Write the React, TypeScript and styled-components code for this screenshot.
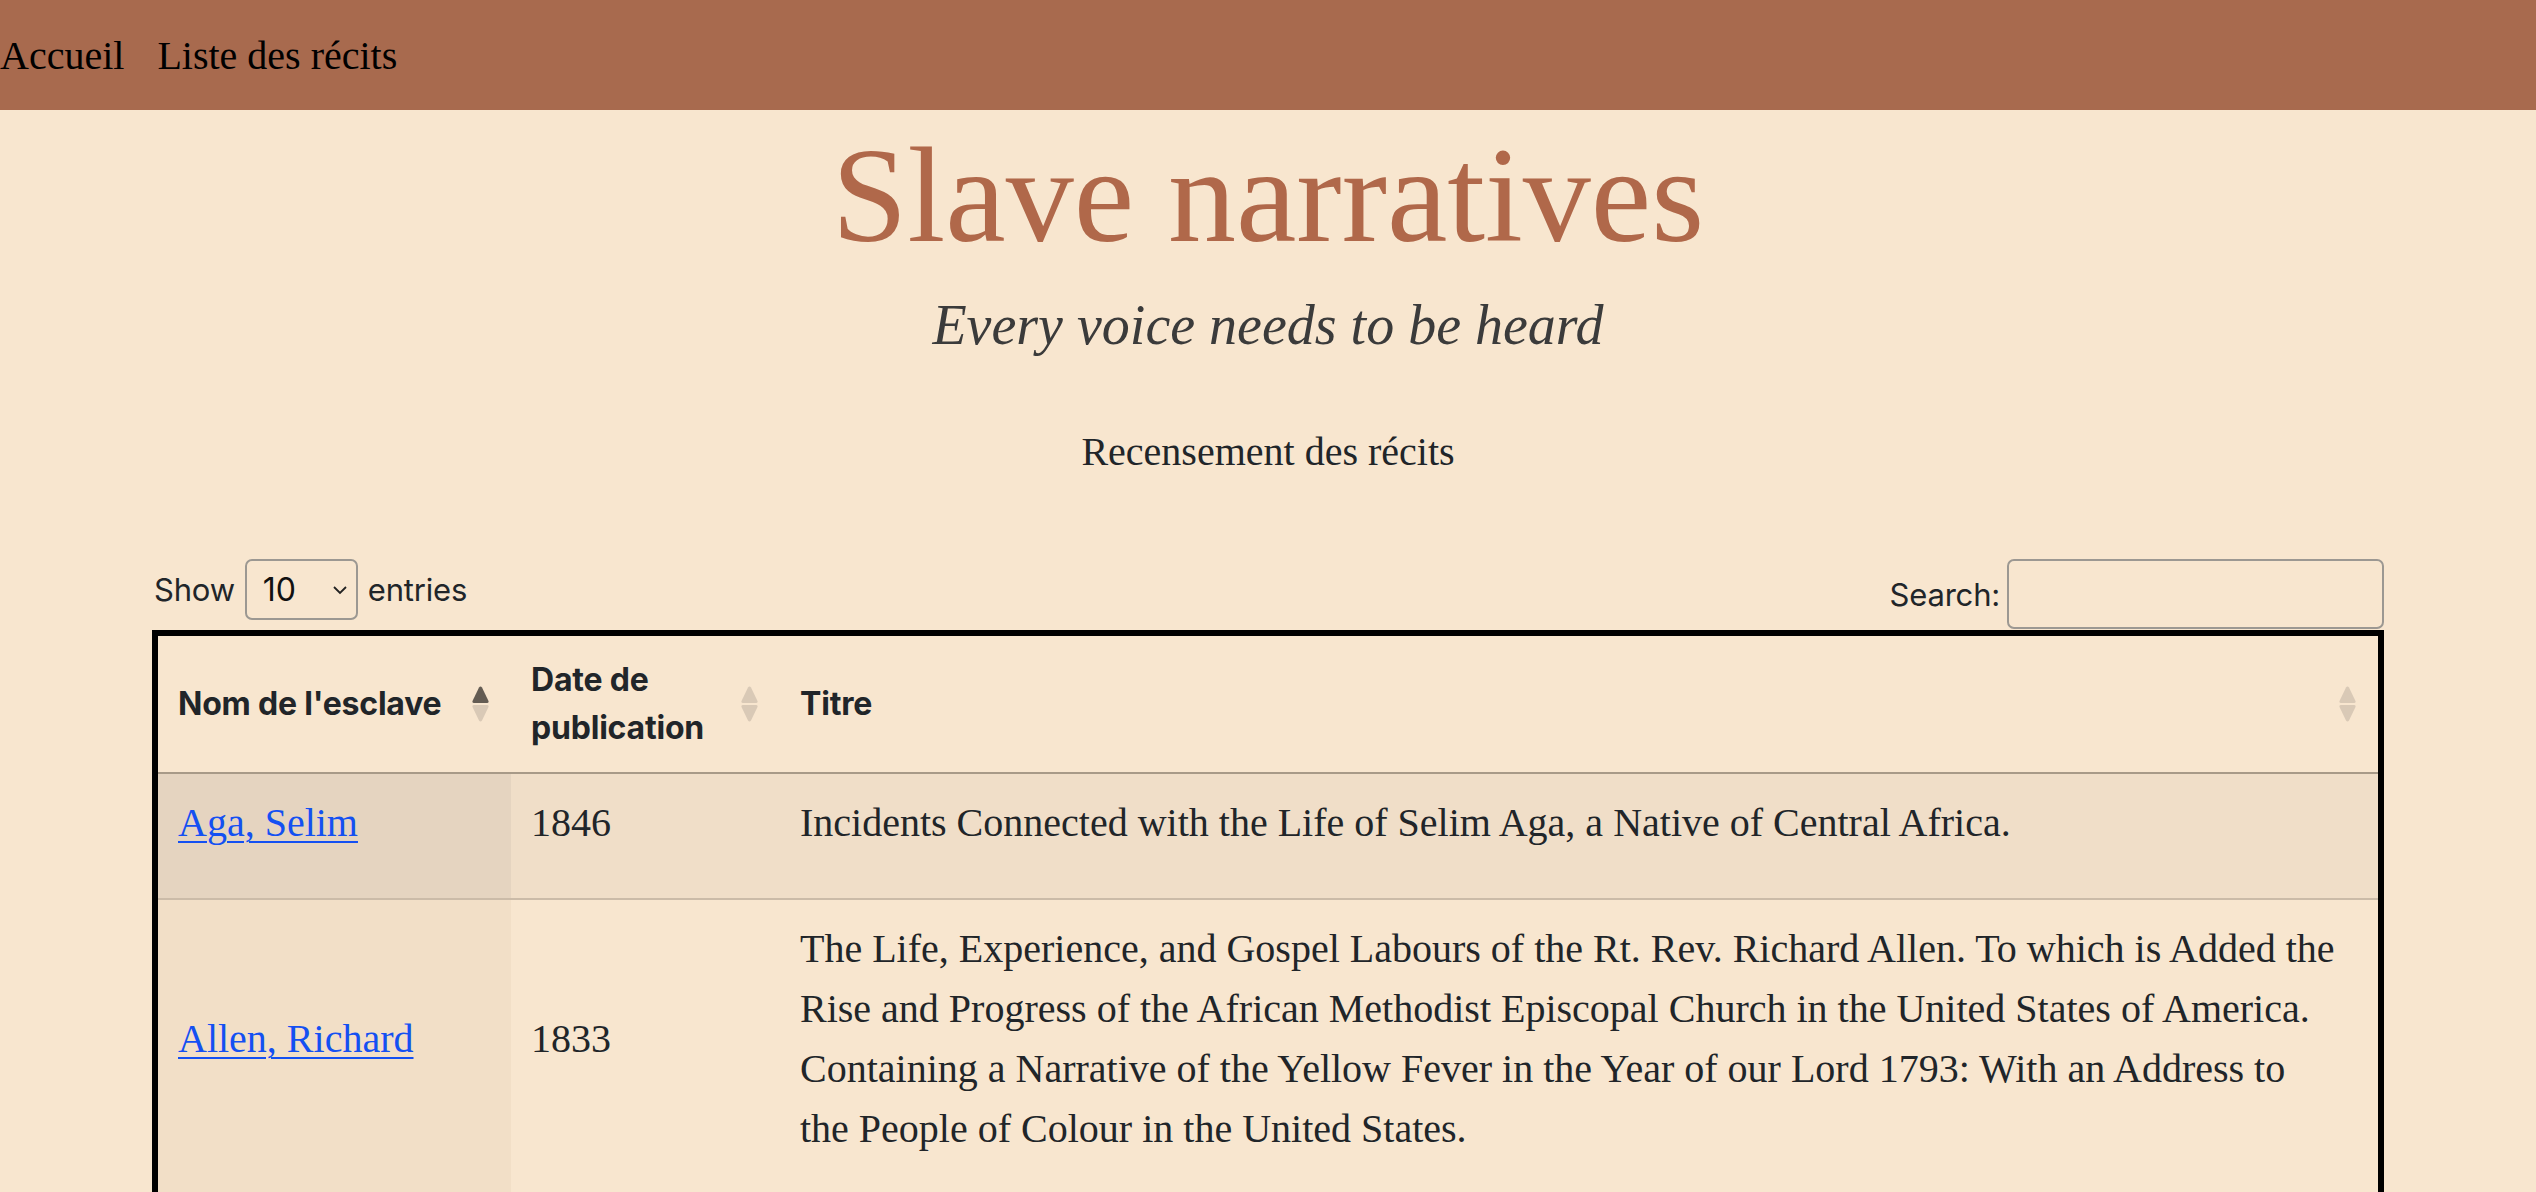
import React from "react";
import styled, { createGlobalStyle } from "styled-components";

const GlobalStyle = createGlobalStyle`
  html, body {
    margin: 0;
    background: #f8e6cf;
  }
  body {
    font-family: "Liberation Serif", "Times New Roman", serif;
    color: #212529;
  }
`;

const Nav = styled.nav`
  height: 110px;
  background: #a86a4e;
  display: flex;
  align-items: center;
  gap: 33px;
`;

const NavLink = styled.a`
  font-size: 40px;
  line-height: 60px;
  padding-top: 2px;
  color: #000;
  text-decoration: none;
`;

const Header = styled.header`
  text-align: center;
`;

const Title = styled.h1`
  margin: 4px 0 0;
  font-size: 136px;
  font-weight: 400;
  line-height: 1.2;
  color: #b0684a;
`;

const Subtitle = styled.p`
  margin: 15px 0 0;
  font-size: 56px;
  font-style: italic;
  line-height: 1.2;
  color: #3b3b3b;
`;

const Lead = styled.p`
  margin: 63px 0 0;
  font-size: 40px;
  line-height: 1.5;
`;

const Main = styled.main`
  max-width: 2232px;
  margin: 77px auto 0;
`;

const Controls = styled.div`
  display: flex;
  justify-content: space-between;
  align-items: flex-start;
  font-family: Inter, "Liberation Sans", sans-serif;
  font-size: 31px;
  letter-spacing: -0.2px;
  color: #212529;
`;

const LengthLabel = styled.label`
  display: flex;
  align-items: center;
  gap: 10px;
  height: 61px;
  padding-left: 2px;
`;

const SelectWrap = styled.span`
  display: inline-grid;
  align-items: center;
  & > * {
    grid-area: 1 / 1;
  }
`;

const Select = styled.select`
  appearance: none;
  width: 113px;
  height: 61px;
  padding: 0 0 0 16px;
  border: 2px solid #9c9892;
  border-radius: 7px;
  background: transparent;
  font-family: inherit;
  font-size: 32px;
  color: #111;
`;

const Chevron = styled.svg`
  justify-self: end;
  margin-right: 10px;
  pointer-events: none;
`;

const SearchLabel = styled.label`
  display: flex;
  align-items: center;
  gap: 7px;
`;

const SearchInput = styled.input`
  width: 377px;
  height: 70px;
  box-sizing: border-box;
  border: 2px solid #9c9892;
  border-radius: 7px;
  background: transparent;
  font-size: 32px;
  padding: 0 10px;
`;

const Table = styled.table`
  width: 100%;
  margin-top: 1px;
  border: 6px solid #000;
  border-collapse: separate;
  border-spacing: 0;
  table-layout: fixed;
`;

const Th = styled.th`
  padding: 20px;
  text-align: left;
  vertical-align: middle;
  font-family: Inter, "Liberation Sans", sans-serif;
  font-size: 32px;
  font-weight: 700;
  line-height: 48px;
  letter-spacing: -0.2px;
  color: #212529;
  border-bottom: 2px solid #a89a88;
`;

const ThInner = styled.div`
  display: flex;
  align-items: center;
  justify-content: space-between;
  gap: 12px;
  margin-right: 2px;
`;

const Row = styled.tr`
  & + & > td {
    border-top: 2px solid #cbbba8;
  }
`;

const cellBg = (striped: boolean, sorted: boolean) => {
  if (striped && sorted) return "#e5d4c0";
  if (striped) return "#f0dec8";
  if (sorted) return "#f2dfc7";
  return "transparent";
};

const Td = styled.td<{ $striped: boolean; $sorted?: boolean }>`
  padding: 19px 20px 13px;
  vertical-align: middle;
  font-size: 40px;
  line-height: 60px;
  background: ${(p) => cellBg(p.$striped, !!p.$sorted)};
  & p {
    margin: 0 0 32px;
  }
`;

const NameLink = styled.a`
  color: #1450f2;
  text-decoration: underline;
  text-decoration-thickness: 2px;
  text-underline-offset: 5px;
`;

const SortIcon = ({ active }: { active?: boolean }) => {
  const light = "#d9c9b6";
  return (
    <svg width="17" height="36" viewBox="0 0 17 36" aria-hidden="true">
      <path d="M7 1.5 Q8.5 -0.5 10 1.5 L16.5 15 Q17 17 15 17 L2 17 Q0 17 0.5 15 Z" fill={active ? "#645c53" : light} />
      <path d="M7 34.5 Q8.5 36.5 10 34.5 L16.5 21 Q17 19 15 19 L2 19 Q0 19 0.5 21 Z" fill={light} />
    </svg>
  );
};

const rows = [
  {
    name: "Aga, Selim",
    year: "1846",
    lines: ["Incidents Connected with the Life of Selim Aga, a Native of Central Africa."],
  },
  {
    name: "Allen, Richard",
    year: "1833",
    lines: [
      "The Life, Experience, and Gospel Labours of the Rt. Rev. Richard Allen. To which is Added the",
      "Rise and Progress of the African Methodist Episcopal Church in the United States of America.",
      "Containing a Narrative of the Yellow Fever in the Year of our Lord 1793: With an Address to",
      "the People of Colour in the United States.",
    ],
  },
];

export default function App() {
  return (
    <>
      <GlobalStyle />
      <Nav>
        <NavLink href="#">Accueil</NavLink>
        <NavLink href="#">Liste des récits</NavLink>
      </Nav>
      <Header>
        <Title>Slave narratives</Title>
        <Subtitle>Every voice needs to be heard</Subtitle>
        <Lead>Recensement des récits</Lead>
      </Header>
      <Main>
        <Controls>
          <LengthLabel>
            Show
            <SelectWrap>
              <Select defaultValue="10">
                <option value="10">10</option>
                <option value="25">25</option>
                <option value="50">50</option>
                <option value="100">100</option>
              </Select>
              <Chevron width="16" height="10" viewBox="0 0 16 10">
                <path d="M2 2 L8 8 L14 2" fill="none" stroke="#222" strokeWidth="1.8" />
              </Chevron>
            </SelectWrap>
            entries
          </LengthLabel>
          <SearchLabel>
            Search:
            <SearchInput type="search" />
          </SearchLabel>
        </Controls>
        <Table>
          <colgroup>
            <col style={{ width: 353 }} />
            <col style={{ width: 269 }} />
            <col />
          </colgroup>
          <thead>
            <tr>
              <Th>
                <ThInner>
                  Nom de l'esclave
                  <SortIcon active />
                </ThInner>
              </Th>
              <Th>
                <ThInner>
                  <span>
                    Date de
                    <br />
                    publication
                  </span>
                  <SortIcon />
                </ThInner>
              </Th>
              <Th>
                <ThInner>
                  Titre
                  <SortIcon />
                </ThInner>
              </Th>
            </tr>
          </thead>
          <tbody>
            {rows.map((r, i) => (
              <Row key={r.name}>
                <Td $striped={i % 2 === 0} $sorted>
                  <p>
                    <NameLink href="#">{r.name}</NameLink>
                  </p>
                </Td>
                <Td $striped={i % 2 === 0}>
                  <p>{r.year}</p>
                </Td>
                <Td $striped={i % 2 === 0}>
                  <p>
                    {r.lines.map((line, j) => (
                      <React.Fragment key={j}>
                        {j > 0 && <br />}
                        {line}
                      </React.Fragment>
                    ))}
                  </p>
                </Td>
              </Row>
            ))}
          </tbody>
        </Table>
      </Main>
    </>
  );
}
